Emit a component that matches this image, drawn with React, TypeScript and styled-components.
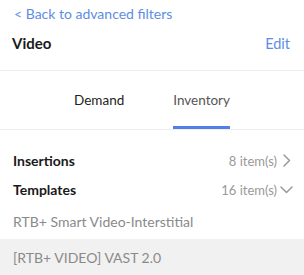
import styled, { createGlobalStyle } from "styled-components";

const GlobalStyle = createGlobalStyle`
  body {
    margin: 0;
    background: #fff;
    font-family: Lato, "Noto Sans", sans-serif;
  }
`;

const Page = styled.div`
  width: 304px;
  height: 275px;
  overflow: hidden;
  display: flex;
  flex-direction: column;
`;

const Header = styled.div`
  padding: 4px 14px 0 12px;
  height: 67px;
  border-bottom: 1px solid #eeeeee;
`;

const BackLink = styled.a`
  display: block;
  color: #5d8ee2;
  font-size: 14px;
  line-height: 20px;
  padding-left: 2px;
  cursor: pointer;
`;

const TitleRow = styled.div`
  display: flex;
  justify-content: space-between;
  align-items: center;
  margin-top: 10px;
`;

const Title = styled.h1`
  margin: 0;
  font-size: 15px;
  font-weight: 700;
  color: #1a1a1a;
`;

const EditLink = styled.a`
  color: #5d8ee2;
  font-size: 14.5px;
  cursor: pointer;
`;

const Tabs = styled.div`
  display: flex;
  justify-content: center;
  gap: 49px;
  height: 58px;
  border-bottom: 1px solid #eeeeee;
`;

const Tab = styled.div<{ $active?: boolean }>`
  display: flex;
  align-items: center;
  font-size: 13.5px;
  color: ${(p) => (p.$active ? "#555" : "#222")};
  box-shadow: ${(p) => (p.$active ? "inset 0 -3px 0 #4f7fe8" : "none")};
`;

const List = styled.div`
  padding: 16px 0 0;
`;

const Row = styled.div`
  display: flex;
  justify-content: space-between;
  align-items: center;
  height: 29px;
  padding: 0 11px 0 13px;
`;

const RowLabel = styled.span`
  font-size: 14px;
  font-weight: 700;
  color: #1a1a1a;
`;

const RowCount = styled.span`
  display: flex;
  align-items: center;
  gap: 3px;
  font-size: 13px;
  color: #999;
`;

const ChevronBox = styled.span`
  display: flex;
  align-items: center;
  justify-content: center;
  width: 13px;
  height: 13px;
`;

const SubItem = styled.div<{ $selected?: boolean }>`
  display: flex;
  align-items: center;
  height: ${(p) => (p.$selected ? "36px" : "35px")};
  padding: 0 13px;
  font-size: 14px;
  color: #8a8a8a;
  background: ${(p) => (p.$selected ? "#f1f1f1" : "transparent")};
`;

const Chevron = ({ down }: { down?: boolean }) => (
  <ChevronBox>
    <svg width="13" height="13" viewBox="0 0 13 13" fill="none">
      <path
        d={down ? "M1 4 L6.5 9.5 L12 4" : "M4 1 L9.5 6.5 L4 12"}
        stroke="#9a9a9a"
        strokeWidth="1.5"
        strokeLinecap="round"
        strokeLinejoin="round"
      />
    </svg>
  </ChevronBox>
);

export default function App() {
  return (
    <>
      <GlobalStyle />
      <Page>
        <Header>
          <BackLink>&lt; Back to advanced filters</BackLink>
          <TitleRow>
            <Title>Video</Title>
            <EditLink>Edit</EditLink>
          </TitleRow>
        </Header>
        <Tabs>
          <Tab>Demand</Tab>
          <Tab $active>Inventory</Tab>
        </Tabs>
        <List>
          <Row>
            <RowLabel>Insertions</RowLabel>
            <RowCount>
              8 item(s) <Chevron />
            </RowCount>
          </Row>
          <Row>
            <RowLabel>Templates</RowLabel>
            <RowCount>
              16 item(s) <Chevron down />
            </RowCount>
          </Row>
          <SubItem>RTB+ Smart Video-Interstitial</SubItem>
          <SubItem $selected>[RTB+ VIDEO] VAST 2.0</SubItem>
        </List>
      </Page>
    </>
  );
}
